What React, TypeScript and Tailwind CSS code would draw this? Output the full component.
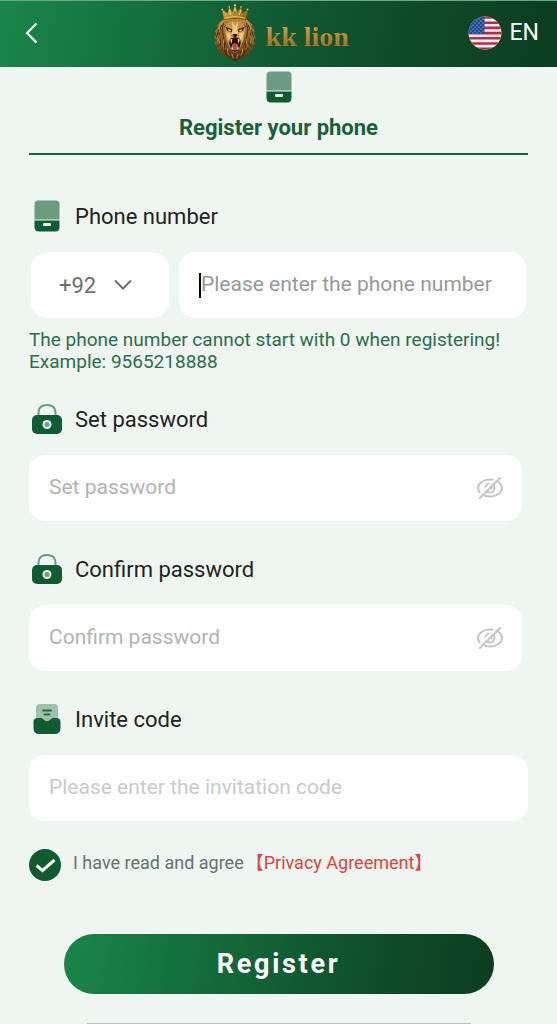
import { useState } from "react";
import type { ReactNode } from "react";

function LionLogo() {
    return (
        <svg viewBox="44 14 126 174" className="h-[58px] w-[42px]" aria-hidden="true">
            <defs>
                <linearGradient id="mane" x1="0" y1="0" x2="0" y2="1">
                    <stop offset="0" stopColor="#b98538"/>
                    <stop offset=".5" stopColor="#8f5f24"/>
                    <stop offset="1" stopColor="#4a2c12"/>
                </linearGradient>
                <linearGradient id="crown" x1="0" y1="0" x2="1" y2="1">
                    <stop offset="0" stopColor="#f1d06a"/>
                    <stop offset=".5" stopColor="#c28c2c"/>
                    <stop offset="1" stopColor="#875617"/>
                </linearGradient>
            </defs>
            <path fill="url(#mane)"
                d="M74 58 62 68 54 78 56 84 47 96 51 102 45 116 50 122 46 134 54 140 53 150 62 154 65 164 74 166 82 176 92 177 107 187 120 178 130 177 138 168 148 165 151 154 160 150 159 140 168 132 163 124 169 114 163 102 166 94 158 84 159 76 150 68 140 58Z"/>
            <g fill="none" stroke="#3f250f" strokeWidth="3" strokeLinecap="round">
                <path d="M66 78Q56 96 62 118T58 140M72 72Q64 92 72 112T68 152M58 92 52 112M78 132Q70 146 82 168M88 158Q88 168 96 176"/>
                <path d="M148 78Q158 96 152 118T156 140M142 72Q150 92 142 112T146 152M156 92 162 112M136 132Q144 146 132 168M126 158Q126 168 118 176"/>
                <path d="M107 166V182M84 70 76 82M130 70 138 82"/>
            </g>
            <g fill="none" stroke="#d9a850" strokeWidth="2" strokeLinecap="round">
                <path d="M70 66Q58 80 60 98M62 108Q56 122 60 130M74 120Q68 134 74 150M84 148Q82 160 90 168M98 164 102 176"/>
                <path d="M144 66Q156 80 154 98M152 108Q158 122 154 130M140 120Q146 134 140 150M130 148Q132 160 124 168M116 164 112 176"/>
            </g>
            <path fill="#c4914a" d="M80 72Q107 58 134 72L138 92 132 122 122 148 107 160 92 148 82 122 76 92Z"/>
            <path fill="#efc877" d="M98 66 107 80 116 66 114 92 118 106 107 112 96 106 100 92ZM80 98 94 102 94 118 86 124ZM134 98 120 102 120 118 128 124Z"/>
            <path fill="#3a210e" d="M78 82 98 90 98 98 84 94ZM136 82 116 90 116 98 130 94Z"/>
            <path fill="#f4d34d" d="M86 90 95 92 93 96 87 94ZM128 90 119 92 121 96 127 94Z"/>
            <path fill="#24150e" d="M99 104H115L111 112 107 115 103 112Z"/>
            <path fill="#30100c" d="M92 118 107 114 122 118 124 132 118 152 107 158 96 152 90 132Z"/>
            <path fill="#b8534a" d="M98 136Q107 128 116 136L114 151 107 154 100 151Z"/>
            <path fill="#fff5dc" d="M93 120 99 119 96 134ZM121 120 115 119 118 134ZM96 150 98 139 102 151ZM118 150 116 139 112 151Z"/>
            <path fill="url(#crown)" stroke="#7a4d13" strokeWidth="1.5"
                d="M74 62 68 30 84 42 90 24 99 38 107 18 115 38 125 24 130 42 146 30 140 62Q107 52 74 62Z"/>
            <path fill="none" stroke="#ffe89a" strokeWidth="2" d="M76 57Q107 47 138 57M107 24V46M90 31 94 47M125 31 120 47"/>
            <g fill="#f3d477">
                <circle cx="107" cy="18" r="3"/>
                <circle cx="90" cy="23" r="2.5"/>
                <circle cx="125" cy="23" r="2.5"/>
                <circle cx="69" cy="30" r="2.5"/>
                <circle cx="145" cy="30" r="2.5"/>
            </g>
            <path fill="#3f8f52" d="M107 35 111 41 107 47 103 41Z"/>
        </svg>
    )
}

function FlagIcon() {
    return (
        <svg viewBox="0 0 34 34" className="size-[34px]" aria-hidden="true">
            <defs>
                <clipPath id="round"><circle cx="17" cy="17" r="16.5"/></clipPath>
                <pattern id="stars" width="4" height="4" patternUnits="userSpaceOnUse">
                    <circle cx="1" cy="1" r=".6" fill="#c9d6ee"/>
                    <circle cx="3" cy="3" r=".6" fill="#c9d6ee"/>
                </pattern>
            </defs>
            <g clipPath="url(#round)">
                <path fill="#f7eff0" d="M0 0H34V34H0Z"/>
                <path stroke="#b92b4a" strokeWidth="2.6"
                    d="M0 1.5H34M0 6.7H34M0 11.9H34M0 17.1H34M0 22.3H34M0 27.5H34M0 32.7H34"/>
                <path fill="#204b94" d="M0 0H16.5V18H0Z"/>
                <path fill="url(#stars)" d="M0 0H16V18H0Z"/>
            </g>
        </svg>
    )
}

function PhoneIcon() {
    return (
        <svg viewBox="0 0 26 32" className="h-8 w-[26px]" aria-hidden="true">
            <path fill="#6b9b83" d="M4 .5H22Q25.5 .5 25.5 4V19.5H.5V4Q.5 .5 4 .5Z"/>
            <path fill="#0f5c32" d="M.5 20.5H25.5V27Q25.5 31.5 21 31.5H5Q.5 31.5 .5 27Z"/>
            <rect x="9" y="23" width="8" height="3" rx="1" fill="#e6f2ea"/>
        </svg>
    )
}

function LockIcon() {
    return (
        <svg viewBox="0 0 30 32" className="h-8 w-[30px]" aria-hidden="true">
            <path fill="none" stroke="#6b9b83" strokeWidth="2" d="M6.500 13V9Q7 2 15 2T23.500 9V13"/>
            <rect y="12" width="30" height="19" rx="5" fill="#0f5c32"/>
            <circle cx="15" cy="21.5" r="4.5" fill="#e6f2ea"/>
            <circle cx="15" cy="21.5" r="2.5" fill="#6b9b83"/>
        </svg>
    )
}

function InviteIcon() {
    return (
        <svg viewBox="0 0 28 32" className="h-8 w-7" aria-hidden="true">
            <rect x="3" y="1" width="22" height="24" rx="4" fill="#a0c0ae"/>
            <path stroke="#1f6b42" strokeWidth="2" strokeLinecap="round" d="M10 7.5H18M11.5 11.5H16.5"/>
            <path fill="#0f5c32" d="M4 15H8Q9.5 15 10.5 16.5 14 20 17.5 16.5 18.5 15 20 15H24Q27.5 15.5 27.5 19V25Q27.5 31 21.5 31H6.5Q.5 31 .5 25V19Q.5 15.5 4 15Z"/>
        </svg>
    )
}

function EyeOffIcon() {
    return (
        <svg viewBox="0 0 28 24" className="h-6 w-7" fill="none" stroke="#c4c6c5" strokeWidth="2" strokeLinecap="round" aria-hidden="true">
            <ellipse cx="14" cy="12" rx="12" ry="8.5"/>
            <circle cx="14" cy="12" r="4.5"/>
            <path d="M13 10.5Q15.500 10 15.500 12.500"/>
            <path stroke="#fff" d="M2 20.5 22 .8"/>
            <path d="M4 22 24 2"/>
        </svg>
    )
}

function FieldLabel({ icon, htmlFor, children }: { icon: ReactNode; htmlFor: string; children: ReactNode }) {
    return (
        <label htmlFor={htmlFor} className="flex h-8 items-center gap-[10px] text-[22px] text-[#1c2420]">
            <span className="flex w-9 justify-center">{icon}</span>
            {children}
        </label>
    )
}

function PasswordField({ id, label }: { id: string; label: string }) {
    const [visible, setVisible] = useState(false);

    return (
        <div>
            <FieldLabel htmlFor={id} icon={<LockIcon/>}>{label}</FieldLabel>
            <div className="mt-5 mr-[6px] flex h-[66px] items-center rounded-2xl bg-white pr-[18px] pl-5">
                <input id={id} type={visible ? "text" : "password"} placeholder={label}
                    className="min-w-0 flex-1 text-[21px] outline-none placeholder:text-[#b0b4b2]"/>
                <button type="button" aria-label="Toggle visibility" onClick={() => setVisible(!visible)}>
                    <EyeOffIcon/>
                </button>
            </div>
        </div>
    )
}

export default function App() {
    return (
        <div className="min-h-screen bg-[#eff5f1] font-[Roboto,sans-serif]">
            <header className="grid h-[67px] grid-cols-[1fr_auto_1fr] items-center border-t border-[#6fa588] bg-linear-[100deg,#18864b,#10562f_55%,#0b3c20] pr-[18px] pb-[2px] pl-6">
                <button type="button" aria-label="Back" className="w-6 text-white">
                    <svg viewBox="4 0 24 24" className="size-6" fill="none" stroke="currentColor" strokeWidth="2.2" aria-hidden="true">
                        <path d="M16.5 2.5 7 12 16.5 21.5"/>
                    </svg>
                </button>
                <div className="flex items-center gap-[10px]">
                    <LionLogo/>
                    <span className="bg-linear-to-b from-[#e2c77c] via-[#c08d38] to-[#8a5c22] bg-clip-text pt-2 font-['Liberation_Serif',serif] text-[28px] font-bold text-transparent">
                        kk lion
                    </span>
                </div>
                <button type="button" className="flex items-center gap-2 justify-self-end text-[23px] text-white">
                    <FlagIcon/>
                    EN
                </button>
            </header>

            <form className="px-[29px]" onSubmit={(e) => e.preventDefault()}>
                <div className="flex flex-col items-center border-b-2 border-[#17603a] pt-1 pb-2">
                    <PhoneIcon/>
                    <h1 className="mt-2 text-[22px] leading-[34px] font-bold text-[#17603a]">Register your phone</h1>
                </div>

                <div className="mt-[45px]">
                    <FieldLabel htmlFor="phone" icon={<PhoneIcon/>}>Phone number</FieldLabel>
                    <div className="mx-0.5 mt-5 flex gap-[10px]">
                        <div className="grid h-[66px] w-[138px] items-center rounded-2xl bg-white">
                            <select aria-label="Country code"
                                className="col-start-1 row-start-1 h-full w-full appearance-none pl-7 text-[22px] text-[#6b706d] outline-none">
                                <option>+92</option>
                            </select>
                            <svg viewBox="0 0 20 12" className="pointer-events-none col-start-1 row-start-1 mr-9 h-3 w-5 justify-self-end" fill="none" stroke="#6b706d" strokeWidth="2" aria-hidden="true">
                                <path d="M2 1.5 10 9.5 18 1.5"/>
                            </svg>
                        </div>
                        <div className="flex h-[66px] min-w-0 flex-1 items-center rounded-2xl bg-white px-5">
                            <span className="h-[25px] w-[2px] bg-black"/>
                            <input id="phone" type="tel" placeholder="Please enter the phone number"
                                className="min-w-0 flex-1 text-[21px] outline-none placeholder:text-[#969a98]"/>
                        </div>
                    </div>
                    <p className="mt-[11px] text-[19px] leading-[22px] text-[#2b6e4b]">
                        The phone number cannot start with 0 when registering!<br/>
                        Example: 9565218888
                    </p>
                </div>

                <div className="mt-[30px] flex flex-col gap-8">
                    <PasswordField id="password" label="Set password"/>
                    <PasswordField id="confirm" label="Confirm password"/>
                    <div>
                        <FieldLabel htmlFor="invite" icon={<InviteIcon/>}>Invite code</FieldLabel>
                        <div className="mt-5 flex h-[66px] items-center rounded-2xl bg-white px-5">
                            <input id="invite" type="text" placeholder="Please enter the invitation code"
                                className="min-w-0 flex-1 text-[21px] outline-none placeholder:text-[#c8cbc9]"/>
                        </div>
                    </div>
                </div>

                <div className="mt-7 flex items-center text-lg">
                    <span className="mr-3 grid">
                        <input id="agree" type="checkbox" defaultChecked
                            className="peer col-start-1 row-start-1 size-8 appearance-none rounded-full border-2 border-[#0f5c32] checked:bg-[#0f5c32]"/>
                        <svg viewBox="0 0 32 32" className="pointer-events-none invisible col-start-1 row-start-1 size-8 peer-checked:visible" fill="none" stroke="#f2f8f4" strokeWidth="3" aria-hidden="true">
                            <path d="M7.5 16.5 13.5 21.5 25.5 11"/>
                        </svg>
                    </span>
                    <label htmlFor="agree" className="pb-1 text-[#69716d]">I have read and agree</label>
                    <a href="#" className="ml-0.5 pb-1 font-[Roboto,'Noto_Sans_CJK_SC',sans-serif] text-[#d9463f]">【Privacy Agreement】</a>
                </div>

                <button type="submit"
                    className="mx-auto mt-[53px] block h-[60px] w-[430px] max-w-full rounded-full bg-linear-[100deg,#18864b,#10562f_60%,#0b3c20] text-[27px] font-bold tracking-widest text-white">
                    Register
                </button>
                <hr className="mx-auto mt-[29px] w-96 max-w-full border-[#b4c0c2]"/>
            </form>
        </div>
    )
}
